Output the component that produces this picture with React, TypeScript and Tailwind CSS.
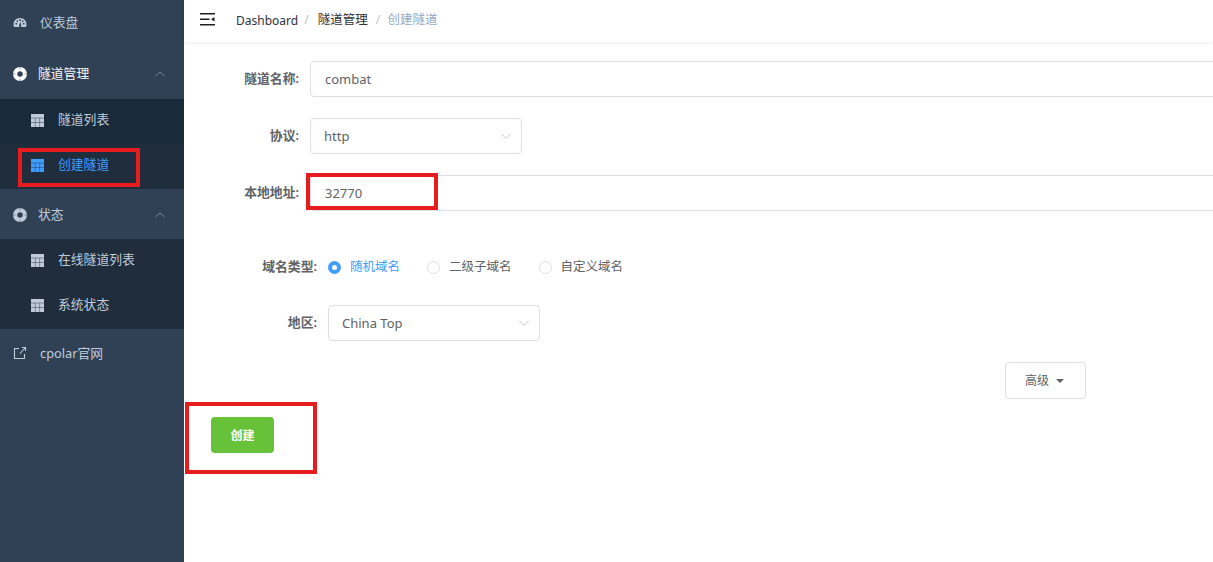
import React from 'react';

const font = '[font-family:"Noto_Sans","Noto_Sans_CJK_SC",sans-serif]';

const GaugeIcon = () => (
  <svg width="14" height="14" viewBox="0 0 14 14" className="text-[#bfcbd9]">
    <path fill="currentColor" fillRule="evenodd" d="M7 2C3.2 2 .5 4.9.5 8.4c0 1 .2 1.9.6 2.6h11.8c.4-.7.6-1.6.6-2.6C13.500 4.900 10.800 2 7 2Zm-.8 1.300h1.600v1.600H6.200V3.300ZM2.500 7h1.600v1.600H2.500V7Zm7.400 0h1.600v1.600H9.900V7ZM3.600 4.500h1.400v1.400H3.600V4.500Zm5.400 0h1.400v1.400H9V4.500ZM6.100 9.500 7.600 5.700l.6 4a1.100 1.100 0 1 1-2.100-.2Z" />
  </svg>
);

const RingIcon = ({ active }: { active?: boolean }) => (
  <svg width="14" height="14" viewBox="0 0 14 14" className={active ? 'text-white' : 'text-[#bfcbd9]'}>
    <circle cx="7" cy="7" r="4.900" fill="none" stroke="currentColor" strokeWidth="4.200" />
    <path stroke="#304156" strokeOpacity="0.5" strokeWidth="1" d="M7 0v2.400M7 11.600V14M0 7h2.400M11.600 7H14" />
  </svg>
);

const TableIcon = ({ active }: { active?: boolean }) => (
  <svg width="13" height="13" viewBox="0 0 13 13" className={active ? 'text-[#409eff]' : 'text-[#bfcbd9]'}>
    <path fill="currentColor" d="M0 0h13v13H0z" />
    <path stroke="#1f2d3d" strokeOpacity="0.55" strokeWidth="0.800" d="M0 4h13M0 8.500h13M4.300 4v9M8.700 4v9" />
  </svg>
);

const LinkIcon = () => (
  <svg width="14" height="14" viewBox="0 0 14 14" fill="none" stroke="#bfcbd9" strokeWidth="1.100" className="mt-[-2px]">
    <path d="M6 2.500H1.500v10h10V8" />
    <path d="M7 7.500 12.500 1.500M9 1.500h3.500V5" />
  </svg>
);

const Chevron = () => (
  <svg width="12" height="12" viewBox="0 0 12 12" fill="none" stroke="#77869a" strokeWidth="1">
    <path d="M1.500 8 6 4l4.500 4" />
  </svg>
);

const DownChevron = () => (
  <svg width="12" height="12" viewBox="0 0 12 12" fill="none" stroke="#c0c4cc" strokeWidth="1">
    <path d="M1.500 4 6 8.500 10.500 4" />
  </svg>
);

const SubItem = ({ label, active, dark }: { label: string; active?: boolean; dark?: boolean }) => (
  <div className={`flex h-[45px] items-center pb-[3px] pl-[31px] ${dark ? 'bg-[#192a3b]' : 'bg-[#1f2d3d]'}`}>
    <TableIcon active={active} />
    <span className={`ml-[14px] text-[12.800px] ${active ? 'text-[#409eff]' : 'text-[#bfcbd9]'}`}>{label}</span>
  </div>
);

const Sidebar = () => (
  <aside className="w-[184px] shrink-0 bg-[#304156]">
    <div className="flex h-[48px] items-center pb-[3px] pl-[13px]">
      <GaugeIcon />
      <span className="ml-[13px] text-[12.800px] text-[#bfcbd9]">仪表盘</span>
    </div>
    <div className="flex h-[51px] items-center justify-between pr-[18px] pl-[13px]">
      <div className="flex items-center">
        <RingIcon active />
        <span className="ml-[11px] text-[12.800px] text-[#f4f4f5]">隧道管理</span>
      </div>
      <Chevron />
    </div>
    <SubItem label="隧道列表" dark />
    <SubItem label="创建隧道" active />
    <div className="flex h-[50px] items-center justify-between pt-[1px] pr-[18px] pl-[13px]">
      <div className="flex items-center">
        <RingIcon />
        <span className="ml-[11px] text-[12.800px] text-[#bfcbd9]">状态</span>
      </div>
      <Chevron />
    </div>
    <SubItem label="在线隧道列表" />
    <SubItem label="系统状态" />
    <div className="flex h-[50px] items-center pl-[13px]">
      <LinkIcon />
      <span className="ml-[13px] text-[12.800px] text-[#bfcbd9]">cpolar官网</span>
    </div>
  </aside>
);

const Header = () => (
  <header className="flex h-[42px] items-center pl-[16px] shadow-[0_1px_4px_rgba(0,21,41,0.08)]">
    <svg width="15" height="13" viewBox="0 0 15 13" className="mt-[-4px]">
      <path fill="#1f1f1f" d="M0 0h15v1.500H0zM0 5.500h9.500V7H0zM0 11h15v1.500H0zM11 6.250 14.500 4v4.500z" />
    </svg>
    <div className="mt-[-1px] ml-[21px] flex items-center text-[12.500px] text-[#303133]">
      <span className="text-[12px]">Dashboard</span>
      <span className="mr-[9px] ml-[6px] text-[#c0c4cc]">/</span>
      <span>隧道管理</span>
      <span className="mr-[7px] ml-[8px] text-[#c0c4cc]">/</span>
      <span className="text-[#97a8be]">创建隧道</span>
    </div>
  </header>
);

const Label = ({ width, children }: { width: string; children: React.ReactNode }) => (
  <label className={`${width} shrink-0 text-right text-[12.800px] font-semibold text-[#606266]`}>{children}</label>
);

const Select = ({ value }: { value: string }) => (
  <div className="flex h-[36px] w-[212px] items-center justify-between rounded border border-[#dcdfe6] pr-[9px] pl-[13px] text-[13px] text-[#606266]">
    <span className="mt-[2px]">{value}</span>
    <DownChevron />
  </div>
);

const Radio = ({ label, checked }: { label: string; checked?: boolean }) => (
  <div className="flex items-center">
    {checked ? (
      <span className="flex h-[13px] w-[13px] items-center justify-center rounded-full bg-[#409eff]">
        <span className="h-[5px] w-[5px] rounded-full bg-white" />
      </span>
    ) : (
      <span className="h-[13px] w-[13px] rounded-full border border-[#dcdfe6]" />
    )}
    <span className={`ml-[9px] text-[12.500px] ${checked ? 'text-[#409eff]' : 'text-[#606266]'}`}>{label}</span>
  </div>
);

export default function App() {
  return (
    <div className={`relative flex h-[562px] w-[1213px] overflow-hidden bg-white ${font}`}>
      <Sidebar />
      <main className="min-w-0 flex-1">
        <Header />
        <form className="pt-[19px]">
          <div className="flex items-center">
            <Label width="w-[115px]">隧道名称:</Label>
            <input
              readOnly
              value="combat"
              className="ml-[11px] h-[36px] w-[920px] shrink-0 rounded border border-[#dcdfe6] pl-[14px] text-[13px] text-[#606266] outline-none"
            />
          </div>
          <div className="mt-[21px] flex items-center">
            <Label width="w-[115px]">协议:</Label>
            <div className="ml-[11px]">
              <Select value="http" />
            </div>
          </div>
          <div className="mt-[21px] flex items-center">
            <Label width="w-[115px]">本地地址:</Label>
            <input
              readOnly
              value="32770"
              className="ml-[11px] h-[36px] w-[920px] shrink-0 rounded border border-[#dcdfe6] pl-[14px] text-[13px] text-[#606266] outline-none"
            />
          </div>
          <div className="mt-[46px] flex h-[20px] items-center">
            <Label width="w-[133px]">域名类型:</Label>
            <div className="ml-[11px] flex items-center gap-[27px]">
              <Radio label="随机域名" checked />
              <Radio label="二级子域名" />
              <Radio label="自定义域名" />
            </div>
          </div>
          <div className="mt-[28px] flex items-center">
            <Label width="w-[133px]">地区:</Label>
            <div className="ml-[11px]">
              <Select value="China Top" />
            </div>
          </div>
          <div className="mt-[21px] pl-[821px]">
            <button
              type="button"
              className="flex h-[37px] w-[81px] items-center justify-center rounded border border-[#dcdfe6] bg-white pr-[2px] text-[12px] text-[#606266]"
            >
              高级
              <span className="ml-[7px] h-0 w-0 border-x-[4px] border-t-[4px] border-x-transparent border-t-[#606266]" />
            </button>
          </div>
          <div className="mt-[18px] pl-[27px]">
            <button
              type="button"
              className="h-[36px] w-[63px] rounded bg-[#67c23a] pt-[2px] text-[12px] font-semibold text-white"
            >
              创建
            </button>
          </div>
        </form>
      </main>

      {/* red annotation boxes drawn over the screenshot */}
      <div className="absolute top-[148px] left-[18px] h-[39px] w-[122px] border-4 border-[#e71c1f]" />
      <div className="absolute top-[173px] left-[306px] h-[37px] w-[132px] border-[4px] border-[#e71c1f]" />
      <div className="absolute top-[402px] left-[185px] h-[72px] w-[132px] border-[4px] border-[#e71c1f]" />
    </div>
  );
}
